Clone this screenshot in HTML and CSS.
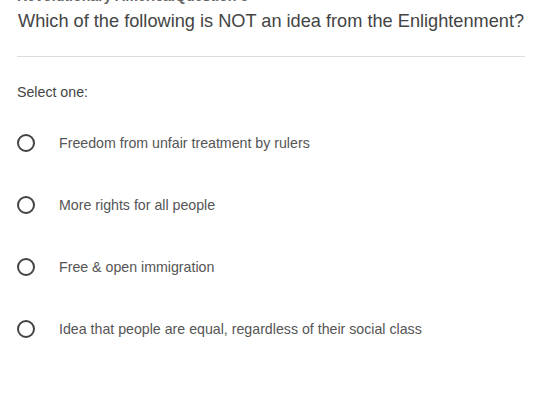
FILE: index.html
```html
<!DOCTYPE html>
<html lang="en">
<head>
<meta charset="UTF-8" />
<meta name="viewport" content="width=device-width, initial-scale=1" />
<title>Question 5</title>
<link rel="stylesheet" href="styles.css">
</head>
<body>

<div class="quiz">
  <div class="crumb">Revolutionary America.Question 5</div>
  <h2 class="question">Which of the following is NOT an idea from the Enlightenment?</h2>
  <hr class="rule">

  <p class="prompt">Select one:</p>

  <ul class="answers">
    <li class="answer"><span class="radio"></span><span class="label">Freedom from unfair treatment by rulers</span></li>
    <li class="answer"><span class="radio"></span><span class="label">More rights for all people</span></li>
    <li class="answer"><span class="radio"></span><span class="label">Free &amp; open immigration</span></li>
    <li class="answer"><span class="radio"></span><span class="label">Idea that people are equal, regardless of their social class</span></li>
  </ul>
</div>

</body>
</html>
```

FILE: styles.css
```css
/* Reset */
*, *::before, *::after {
  margin: 0; padding: 0; box-sizing: border-box;
}
html, body {
  height: 100%;
  font-family: 'Liberation Sans', Arial, sans-serif;
  background: #fff;
  color: #444;
  overflow: hidden;
}

.quiz {
  padding: 0 8px 0 17px;
}

.crumb {
  margin-top: -12px;
  font-size: 14.2px;
  line-height: 16px;
  font-weight: 700;
  color: #666;
}

.question {
  margin-top: 6px;
  padding-left: 1px;
  font-size: 18.2px;
  line-height: 22px;
  font-weight: 400;
  color: #444;
}

.rule {
  margin-top: 24px;
  border: none;
  border-top: 1px solid #ddd;
}

.prompt {
  margin-top: 27px;
  font-size: 14.2px;
  line-height: 16px;
  color: #444;
}

.answers {
  list-style: none;
  margin-top: 33px;
  display: flex;
  flex-direction: column;
  gap: 42px;
}

.answer {
  display: flex;
  align-items: center;
  height: 20px;
  font-size: 14.2px;
  color: #555;
}

.radio {
  flex: 0 0 18px;
  width: 18px;
  height: 18px;
  border: 2px solid #444;
  border-radius: 50%;
}

.label {
  margin-left: 24px;
}
```
